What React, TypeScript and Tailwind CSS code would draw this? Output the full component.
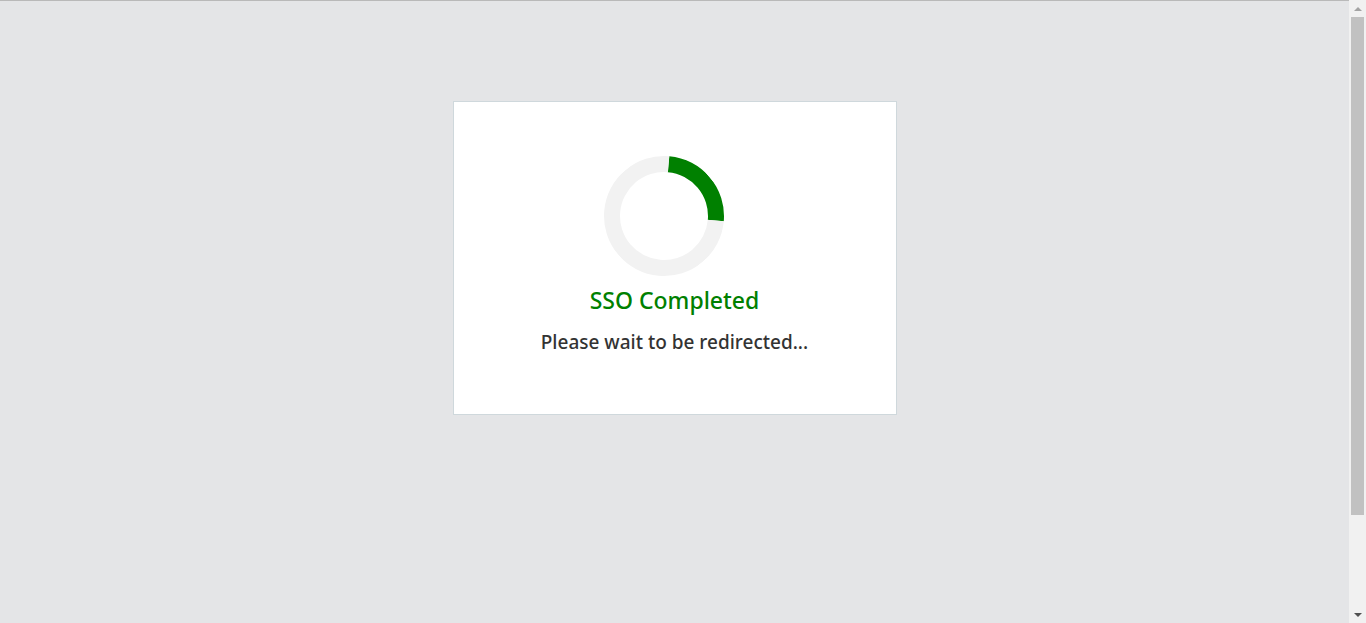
import React from "react";

function Spinner() {
  return (
    <div className="w-[120px] h-[120px] mr-[21px] rounded-full border-[16px] border-[#f2f2f2] border-t-[#008000] rotate-[50deg]" />
  );
}

function Scrollbar() {
  return (
    <div className="w-[17px] h-[623px] bg-[#f1f1f1] flex flex-col items-center">
      <div className="h-[17px] w-full flex items-center justify-center">
        <div className="w-0 h-0 border-l-[4px] border-r-[4px] border-b-[4px] border-l-transparent border-r-transparent border-b-[#a3a3a3]" />
      </div>
      <div className="w-[13px] h-[498px] bg-[#c1c1c1]" />
      <div className="flex-1" />
      <div className="h-[17px] w-full flex items-center justify-center">
        <div className="w-0 h-0 border-l-[4px] border-r-[4px] border-t-[4px] border-l-transparent border-r-transparent border-t-[#505050]" />
      </div>
    </div>
  );
}

export default function App() {
  return (
    <div
      className="flex h-[623px] w-full overflow-hidden bg-[#e4e5e7]"
      style={{ fontFamily: '"Noto Sans", "Open Sans", Arial, sans-serif' }}
    >
      <main className="flex-1 flex flex-col items-center border-t border-[#b9b9b9]">
        <div className="mt-[100px] w-[444px] h-[314px] bg-white border border-[#cfd8dc] flex flex-col items-center pt-[54px]">
          <Spinner />
          <h1 className="mt-[9px] text-[23px] leading-[30px] font-medium text-[#008000]">
            SSO Completed
          </h1>
          <p className="mt-[14px] text-[19px] leading-[26px] font-medium text-[#333333]">
            Please wait to be redirected...
          </p>
        </div>
      </main>
      <Scrollbar />
    </div>
  );
}
